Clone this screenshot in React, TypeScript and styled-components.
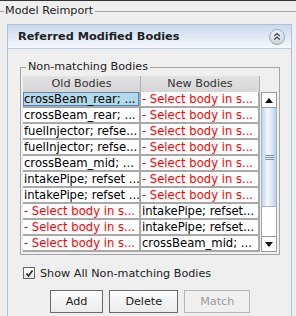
import styled, { createGlobalStyle } from 'styled-components';

const GlobalStyle = createGlobalStyle`
  html, body {
    margin: 0;
    padding: 0;
    background: #eeeeee;
  }
  body {
    font-family: 'DejaVu Sans', Verdana, sans-serif;
    font-size: 11.2px;
    color: #222;
  }
`;

const SWindow = styled.div`
  width: 296px;
  height: 316px;
  overflow: hidden;
  border-top: 1px solid #333;
  box-sizing: border-box;
  background: #eeeeee;
`;

const STitleRow = styled.div`
  display: flex;
  align-items: center;
  height: 20px;
  color: #222;
`;

const STitleLine = styled.div<{ $grow?: boolean }>`
  height: 1px;
  background: #a5a5a5;
  width: ${({ $grow }) => ($grow ? 'auto' : '4px')};
  flex: ${({ $grow }) => ($grow ? 1 : 'none')};
`;

const STitleText = styled.span`
  padding: 0 2px 0 1px;
  line-height: 14px;
`;

const SPanel = styled.div`
  margin: 3px 0 0 7px;
  width: 285px;
  height: 300px;
  box-sizing: border-box;
  border: 1px solid #a9c2dd;
  background: #efefef;
`;

const SPanelHeader = styled.div`
  display: flex;
  align-items: center;
  justify-content: space-between;
  height: 24px;
  box-sizing: border-box;
  padding: 0 6px 0 10px;
  border-bottom: 1px solid #b7cde4;
  background: linear-gradient(to bottom, #c9d9ec, #f6f9fc);
`;

const SPanelTitle = styled.span`
  font-weight: bold;
  font-size: 11.3px;
  color: #222;
`;

const SCollapse = styled.button`
  width: 16px;
  height: 16px;
  padding: 0;
  border: none;
  background: none;
  display: flex;
`;

const SPanelBody = styled.div`
  padding: 0 11px 0 12px;
`;

const SGroup = styled.fieldset`
  margin: 11px 0 0;
  padding: 2px;
  border: 1px solid #a5a5a5;
  min-width: 0;
`;

const SLegend = styled.legend`
  margin-left: 3px;
  padding: 0 2px;
  line-height: 14px;
`;

const SScrollPane = styled.div`
  display: grid;
  grid-template-columns: 237px 16px;
  grid-template-rows: 16px 160px;
  column-gap: 1px;
`;

const SHeader = styled.div`
  display: grid;
  grid-template-columns: 118px 119px;
`;

const SHeaderCell = styled.div`
  text-align: center;
  line-height: 16px;
  background: linear-gradient(to bottom, #e2e2e2, #d6d6d6);
  border-right: 1px solid #b0b0b0;
  color: #333;
`;

const SBody = styled.div`
  grid-column: 1;
  display: grid;
  grid-template-columns: 118px 119px;
  grid-auto-rows: 16px;
  background: #fff;
`;

const SCell = styled.div<{ $missing?: boolean; $selected?: boolean }>`
  box-sizing: border-box;
  padding-left: 1px;
  font-size: 11.6px;
  line-height: 14px;
  white-space: nowrap;
  overflow: hidden;
  color: ${({ $missing }) => ($missing ? '#ff0000' : '#000')};
  background: ${({ $selected }) => ($selected ? '#b2dae6' : '#fff')};
  border-right: 2px solid #a9a9a9;
  border-bottom: 2px solid #a9a9a9;
  box-shadow: ${({ $selected }) => ($selected ? 'inset 0 0 0 1px #5e83c0' : 'none')};
`;

const SScrollBar = styled.div`
  grid-column: 2;
  grid-row: 2;
  display: flex;
  flex-direction: column;
`;

const SArrow = styled.div`
  height: 16px;
  box-sizing: border-box;
  border: 1px solid #9a9a9a;
  background: #fbfbfb;
  display: flex;
  align-items: center;
  justify-content: center;
`;

const SThumb = styled.div`
  height: 99px;
  box-sizing: border-box;
  border: 1px solid #9fb5d0;
  border-top: none;
  background: linear-gradient(to right, #c3d5ea, #f5f8fc 40%, #dce7f3 70%, #b9cde5);
  display: flex;
  align-items: center;
  justify-content: center;
`;

const STrack = styled.div`
  flex: 1;
  border-left: 1px solid #a5a5a5;
  border-right: 1px solid #a5a5a5;
  background: #fff;
`;

const SCheckRow = styled.label`
  display: flex;
  align-items: center;
  gap: 5px;
  margin: 11px 0 0 3px;
  height: 14px;
`;

const SCheckBox = styled.span`
  width: 12px;
  height: 12px;
  box-sizing: border-box;
  border: 1px solid #666;
  background: linear-gradient(to bottom, #ffffff, #e4e4e4);
  display: flex;
  align-items: center;
  justify-content: center;
`;

const SButtons = styled.div`
  display: flex;
  justify-content: center;
  gap: 6px;
  margin-top: 10px;
`;

const SButton = styled.button<{ $disabled?: boolean }>`
  height: 23px;
  padding: 0 15px;
  font-family: 'DejaVu Sans', Verdana, sans-serif;
  font-size: 11.2px;
  color: ${({ $disabled }) => ($disabled ? '#9a9a9a' : '#222')};
  border: 1px solid ${({ $disabled }) => ($disabled ? '#b5b5b5' : '#6a6a6a')};
  background: ${({ $disabled }) =>
    $disabled ? '#f0f0f0' : 'linear-gradient(to bottom, #fbfbfb, #ececec)'};
`;

const rows = [
  { old: 'crossBeam_rear; ...', next: null, selected: true },
  { old: 'crossBeam_rear; ...', next: null },
  { old: 'fuelInjector; refse...', next: null },
  { old: 'fuelInjector; refse...', next: null },
  { old: 'crossBeam_mid; ...', next: null },
  { old: 'intakePipe; refset ...', next: null },
  { old: 'intakePipe; refset ...', next: null },
  { old: null, next: 'intakePipe; refset...' },
  { old: null, next: 'intakePipe; refset...' },
  { old: null, next: 'crossBeam_mid; ...' },
];

const PLACEHOLDER = '- Select body in s...';

const App = () => (
  <SWindow>
    <GlobalStyle />
    <STitleRow>
      <STitleLine />
      <STitleText>Model Reimport</STitleText>
      <STitleLine $grow />
    </STitleRow>
    <SPanel>
      <SPanelHeader>
        <SPanelTitle>Referred Modified Bodies</SPanelTitle>
        <SCollapse>
          <svg width='16' height='16' viewBox='0 0 16 16'>
            <defs>
              <linearGradient id='cg' x1='0' y1='0' x2='0' y2='1'>
                <stop offset='0' stopColor='#eef2f7' />
                <stop offset='1' stopColor='#c9d3de' />
              </linearGradient>
            </defs>
            <circle cx='8' cy='8' r='7.5' fill='url(#cg)' stroke='#9aa7b6' />
            <path d='M5.2 7.2 L8 4.6 L10.8 7.2 M5.2 10.6 L8 8 L10.8 10.6' fill='none' stroke='#333' strokeWidth='1.1' />
          </svg>
        </SCollapse>
      </SPanelHeader>
      <SPanelBody>
        <SGroup>
          <SLegend>Non-matching Bodies</SLegend>
          <SScrollPane>
            <SHeader>
              <SHeaderCell>Old Bodies</SHeaderCell>
              <SHeaderCell>New Bodies</SHeaderCell>
            </SHeader>
            <SBody>
              {rows.map((r, i) => [
                <SCell key={`o${i}`} $missing={!r.old} $selected={r.selected}>
                  {r.old ?? PLACEHOLDER}
                </SCell>,
                <SCell key={`n${i}`} $missing={!r.next}>
                  {r.next ?? PLACEHOLDER}
                </SCell>,
              ])}
            </SBody>
            <SScrollBar>
              <SArrow>
                <svg width='8' height='5' viewBox='0 0 8 5'>
                  <path d='M0 5 L4 0 L8 5 Z' fill='#111' />
                </svg>
              </SArrow>
              <SThumb>
                <svg width='9' height='5' viewBox='0 0 9 5'>
                  <path d='M0 0.5 H9 M0 2.5 H9 M0 4.5 H9' stroke='#7c93b3' strokeWidth='1' />
                </svg>
              </SThumb>
              <STrack />
              <SArrow>
                <svg width='8' height='5' viewBox='0 0 8 5'>
                  <path d='M0 0 L4 5 L8 0 Z' fill='#111' />
                </svg>
              </SArrow>
            </SScrollBar>
          </SScrollPane>
        </SGroup>
        <SCheckRow>
          <SCheckBox>
            <svg width='9' height='9' viewBox='0 0 9 9'>
              <path d='M1.5 4.5 L3.5 7 L7.5 1.5' fill='none' stroke='#222' strokeWidth='1.6' />
            </svg>
          </SCheckBox>
          Show All Non-matching Bodies
        </SCheckRow>
        <SButtons>
          <SButton>Add</SButton>
          <SButton>Delete</SButton>
          <SButton $disabled>Match</SButton>
        </SButtons>
      </SPanelBody>
    </SPanel>
  </SWindow>
);

export default App;
